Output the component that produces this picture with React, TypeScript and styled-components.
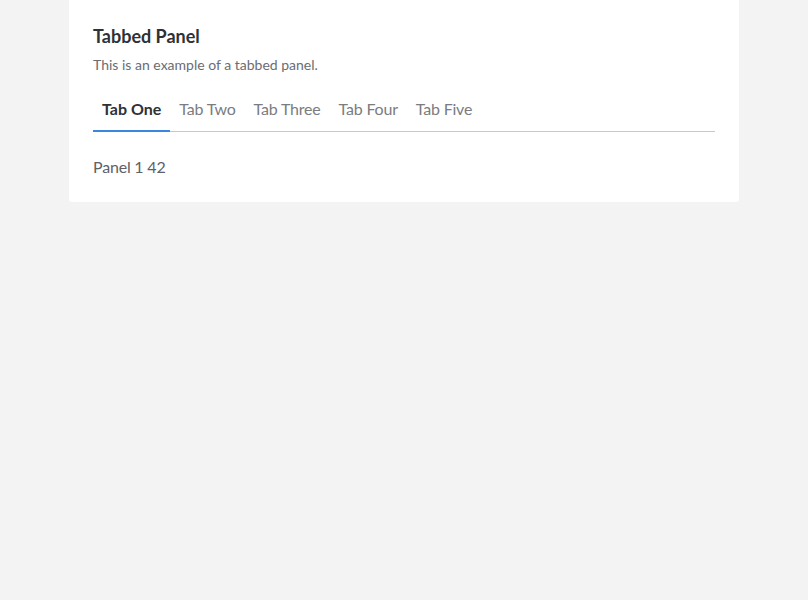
import React, { useState } from "react";
import styled, { createGlobalStyle } from "styled-components";

const Global = createGlobalStyle`
  html, body { margin: 0; padding: 0; background: #f3f3f3; }
  body { font-family: Lato, "Open Sans", sans-serif; }
`;

const Card = styled.section`
  width: 670px;
  margin: 0 auto;
  box-sizing: border-box;
  background: #fff;
  border-radius: 0 0 3px 3px;
  padding: 24px 24px 23px;
`;

const Title = styled.h2`
  margin: 0 0 8px;
  font-size: 18px;
  line-height: 24px;
  font-weight: 700;
  color: #2e3136;
`;

const Subtitle = styled.p`
  margin: 0;
  font-size: 14px;
  line-height: 18px;
  color: #6a6d72;
`;

const TabList = styled.div`
  display: flex;
  margin-top: 15px;
  border-bottom: 1px solid #c8c8c8;
`;

const Tab = styled.button<{ $active: boolean }>`
  appearance: none;
  background: none;
  border: none;
  border-bottom: 2px solid ${(p) => (p.$active ? "#3a86e0" : "transparent")};
  margin-bottom: -1px;
  padding: 8px 9px 9px;
  font-family: inherit;
  font-size: 16px;
  line-height: 24px;
  letter-spacing: ${(p) => (p.$active ? "0" : "-0.2px")};
  font-weight: ${(p) => (p.$active ? 700 : 400)};
  color: ${(p) => (p.$active ? "#2e3136" : "#7a7c80")};
  cursor: pointer;
`;

const PanelBody = styled.div`
  padding-top: 23px;
  font-size: 16px;
  line-height: 24px;
  letter-spacing: -0.2px;
  color: #5e6166;
`;

const tabs = ["Tab One", "Tab Two", "Tab Three", "Tab Four", "Tab Five"];

export default function App() {
  const [active, setActive] = useState(0);
  return (
    <>
      <Global />
      <Card>
        <Title>Tabbed Panel</Title>
        <Subtitle>This is an example of a tabbed panel.</Subtitle>
        <TabList>
          {tabs.map((t, i) => (
            <Tab key={t} $active={i === active} onClick={() => setActive(i)}>
              {t}
            </Tab>
          ))}
        </TabList>
        <PanelBody>Panel {active + 1} 42</PanelBody>
      </Card>
    </>
  );
}
